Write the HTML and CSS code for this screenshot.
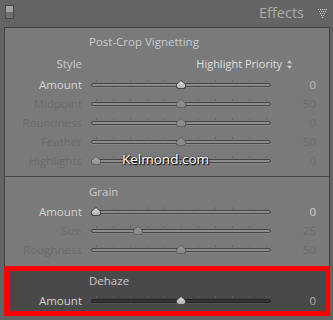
FILE: index.html
```html
<!DOCTYPE html>
<html lang="en">
<head>
    <meta charset="UTF-8">
    <title>Effects</title>
    <link rel="stylesheet" href="styles.css">
</head>
<body>
    <div class="header">
        <span class="solo"></span>
        <span class="heading">Effects</span>
        <svg class="collapse" width="9" height="9" viewBox="0 0 9 9">
            <g fill="#d2d2d2">
                <rect x="0" y="0" width="1" height="1"/><rect x="2" y="0" width="1" height="1"/><rect x="4" y="0" width="1" height="1"/><rect x="6" y="0" width="1" height="1"/><rect x="8" y="0" width="1" height="1"/>
                <rect x="1" y="2" width="1" height="1"/><rect x="3" y="2" width="1" height="1"/><rect x="5" y="2" width="1" height="1"/><rect x="7" y="2" width="1" height="1"/>
                <rect x="2" y="4" width="1" height="1"/><rect x="4" y="4" width="1" height="1"/><rect x="6" y="4" width="1" height="1"/>
                <rect x="3" y="6" width="1" height="1"/><rect x="5" y="6" width="1" height="1"/>
                <rect x="4" y="8" width="1" height="1"/>
            </g>
        </svg>
    </div>

    <div class="panel">
        <!-- post crop vignetting -->
        <div class="section vignette">
            <div class="title">Post-Crop Vignetting</div>
            <div class="row style-row">
                <span class="label">Style</span>
                <span class="select">Highlight Priority <i class="updown"></i></span>
            </div>
            <div class="row amount-row">
                <span class="label">Amount</span>
                <div class="slider"><span class="thumb" style="left:90px"></span></div>
                <span class="value">0</span>
            </div>
            <div class="row off">
                <span class="label">Midpoint</span>
                <div class="slider"><span class="thumb" style="left:90px"></span></div>
                <span class="value">50</span>
            </div>
            <div class="row off">
                <span class="label">Roundness</span>
                <div class="slider"><span class="thumb" style="left:90px"></span></div>
                <span class="value">0</span>
            </div>
            <div class="row off">
                <span class="label">Feather</span>
                <div class="slider"><span class="thumb" style="left:90px"></span></div>
                <span class="value">50</span>
            </div>
            <div class="row off">
                <span class="label">Highlights</span>
                <div class="slider"><span class="thumb light" style="left:5px"></span></div>
                <span class="value">0</span>
                <span class="watermark">Kelmond.com</span>
            </div>
        </div>

        <!-- grain -->
        <div class="section grain">
            <div class="title">Grain</div>
            <div class="row amount-row on">
                <span class="label">Amount</span>
                <div class="slider"><span class="thumb" style="left:5px"></span></div>
                <span class="value">0</span>
            </div>
            <div class="row off">
                <span class="label">Size</span>
                <div class="slider"><span class="thumb" style="left:47px"></span></div>
                <span class="value">25</span>
            </div>
            <div class="row off">
                <span class="label">Roughness</span>
                <div class="slider"><span class="thumb" style="left:90px"></span></div>
                <span class="value">50</span>
            </div>
        </div>

        <!-- dehaze (marked in red) -->
        <div class="section dehaze">
            <div class="title">Dehaze</div>
            <div class="row amount-row">
                <span class="label">Amount</span>
                <div class="slider dark"><span class="thumb" style="left:90px"></span></div>
                <span class="value">0</span>
            </div>
        </div>
    </div>
</body>
</html>
```

FILE: styles.css
```css
html,body{
    margin: 0;
    padding: 0;
}
body{
    width: 333px;
    height: 320px;
    overflow: hidden;
    background-color: #646464;
    font-family: "Open Sans", "DejaVu Sans", sans-serif;
    font-size: 11.5px;
}

/* header */
.header{
    height: 27px;
    display: flex;
    align-items: flex-start;
    padding: 5px 6px 0 5px;
    box-sizing: border-box;
}
.header .solo{
    width: 9px;
    height: 14px;
    box-sizing: border-box;
    border: 1px solid #474747;
    background: linear-gradient(#a3a3a3 0 50%, #6f6f6f 50% 100%);
}
.header .heading{
    margin-left: auto;
    margin-top: -1px;
    font-size: 14.5px;
    line-height: 18px;
    color: #a9a9a9;
}
.header .collapse{
    margin: 4px 0 0 14px;
}

/* panel */
.panel{
    margin-left: 4px;
    width: 326px;
    box-sizing: border-box;
    border: 1px solid #3f3f3f;
    border-bottom: none;
    background-color: #7a7a7a;
}
.section .title{
    padding-left: 84px;
    line-height: 14px;
    color: #c7cbce;
}
.vignette{
    padding: 7px 0 6px;
    border-bottom: 1px solid #464646;
}
.vignette .style-row{
    margin-top: 5px;
}
.vignette .amount-row{
    margin-top: 2px;
}
.grain{
    padding: 8px 0 7px;
}
.grain .amount-row{
    margin-top: 3px;
}
.dehaze{
    margin: 0 -1px;
    padding: 8px 1px 6px;
    background-color: #494949;
    box-shadow: inset 0 0 0 5px #ff0000;
}
.dehaze .amount-row{
    margin-top: 3px;
}

/* rows */
.row{
    position: relative;
    display: grid;
    grid-template-columns: 86px 180px 45px;
    height: 19px;
    line-height: 19px;
}
.row .label{
    text-align: right;
    padding-right: 9px;
    color: #d3d3d3;
}
.row .value{
    text-align: right;
    color: #bcbcbc;
}
.row.on .value{
    color: #d0d0d0;
}
.dehaze .row .value{
    color: #a9a9a9;
}
.row.off .label,
.row.off .value{
    color: #6b6b6b;
}
.style-row .label{
    color: #c9c9c9;
}
.style-row .select{
    grid-column: 2 / 4;
    justify-self: end;
    margin-right: 24px;
    color: #dedede;
    font-size: 11px;
}
.updown{
    display: inline-block;
    width: 5px;
    height: 9px;
    margin-left: 2px;
    vertical-align: -1px;
    background: linear-gradient(#c8c8c8, #c8c8c8) center / 5px 1px no-repeat;
    clip-path: polygon(50% 0, 100% 35%, 0 35%, 50% 0, 50% 100%, 0 65%, 100% 65%, 50% 100%);
    background-color: #c8c8c8;
}

/* sliders */
.slider{
    position: relative;
    height: 19px;
}
.slider::before{
    content: "";
    position: absolute;
    left: 5px;
    top: 5px;
    width: 171px;
    height: 2px;
    background: repeating-linear-gradient(to right, #686868 0 1px, transparent 1px 17px);
}
.slider::after{
    content: "";
    position: absolute;
    left: 0;
    right: 0;
    top: 8px;
    height: 4px;
    box-sizing: border-box;
    border: 1px solid #474747;
    border-radius: 3px;
    background-color: #8c8c8c;
    box-shadow: 0 1px 0 #858585;
}
.slider.dark::before{
    background: repeating-linear-gradient(to right, #5c5c5c 0 1px, transparent 1px 17px);
}
.slider.dark::after{
    border-color: #222;
    background-color: #363636;
    box-shadow: 0 1px 0 #555;
}
.thumb{
    position: absolute;
    top: 5px;
    width: 10px;
    height: 9px;
    margin-left: -5px;
    z-index: 1;
    background-color: #4a4a4a;
    clip-path: polygon(50% 0, 100% 50%, 100% 80%, 85% 100%, 15% 100%, 0 80%, 0 50%);
}
.thumb::after{
    content: "";
    position: absolute;
    left: 1px;
    top: 1px;
    right: 1px;
    bottom: 1px;
    background: linear-gradient(#e0e0e0, #b0b0b0);
    clip-path: polygon(50% 0, 100% 50%, 100% 80%, 85% 100%, 15% 100%, 0 80%, 0 50%);
}
.row.off .thumb{
    background-color: #646464;
}
.row.off .thumb::after{
    background: linear-gradient(#959595, #868686);
}
.row.off .thumb.light::after{
    background: linear-gradient(#a8a8a8, #959595);
}

/* watermark over the image */
.watermark{
    position: absolute;
    left: 117px;
    top: -1px;
    font-size: 13.5px;
    color: #ffffff;
    text-shadow: 1px 1px 1px #000, 0 0 2px #333;
    z-index: 2;
}
```
